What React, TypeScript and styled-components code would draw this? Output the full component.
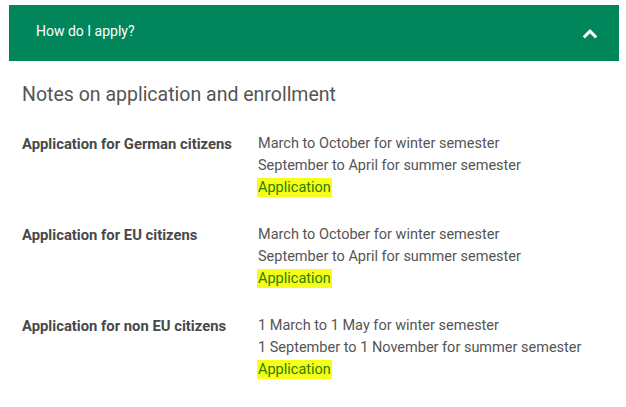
import React from "react";
import styled, { createGlobalStyle } from "styled-components";

interface Note {
  label: string;
  lines: string[];
}

const notes: Note[] = [
  {
    label: "Application for German citizens",
    lines: ["March to October for winter semester", "September to April for summer semester"],
  },
  {
    label: "Application for EU citizens",
    lines: ["March to October for winter semester", "September to April for summer semester"],
  },
  {
    label: "Application for non EU citizens",
    lines: ["1 March to 1 May for winter semester", "1 September to 1 November for summer semester"],
  },
];

const App: React.FunctionComponent = () => {
  return (
    <Page>
      <GlobalStyle />
      <Accordion>
        <Header>
          <HeaderTitle>How do I apply?</HeaderTitle>
          <Chevron viewBox="0 0 16 16">
            <path d="M2.5 11 L8 5.5 L13.5 11" />
          </Chevron>
        </Header>
        <Body>
          <Title>Notes on application and enrollment</Title>
          {notes.map((note) => (
            <Row key={note.label}>
              <Label>{note.label}</Label>
              <Details>
                {note.lines.map((line) => (
                  <Line key={line}>{line}</Line>
                ))}
                <Line>
                  <Link href="#">Application</Link>
                </Line>
              </Details>
            </Row>
          ))}
        </Body>
      </Accordion>
    </Page>
  );
};

export default App;

const GlobalStyle = createGlobalStyle`
  body {
    margin: 0;
    background: #ffffff;
    font-family: Roboto, "Liberation Sans", sans-serif;
  }
`;

const Page = styled.div`
  padding: 5px 7px 0 9px;
`;

const Accordion = styled.section`
  width: 610px;
`;

const Header = styled.div`
  height: 56px;
  background-color: #00865a;
  display: flex;
  align-items: center;
  justify-content: space-between;
  padding: 0 20px 0 27px;
  box-sizing: border-box;
`;

const HeaderTitle = styled.span`
  color: #ffffff;
  font-size: 14px;
  margin-top: -5px;
`;

const Chevron = styled.svg`
  width: 18px;
  height: 18px;
  margin-top: 2px;
  fill: none;
  stroke: #ffffff;
  stroke-width: 2.6;
`;

const Body = styled.div`
  padding: 20px 0 0 13px;
`;

const Title = styled.h2`
  margin: 0 0 24px 0;
  font-size: 19.5px;
  font-weight: 400;
  color: #555555;
  line-height: 28px;
`;

const Row = styled.div`
  display: grid;
  grid-template-columns: 236px 1fr;
  margin-bottom: 25px;
`;

const Label = styled.div`
  font-size: 14.8px;
  font-weight: 700;
  color: #484848;
  line-height: 22px;
`;

const Details = styled.div`
  display: flex;
  flex-direction: column;
`;

const Line = styled.div`
  font-size: 14.5px;
  color: #555555;
  line-height: 22px;
`;

const Link = styled.a`
  color: #2e7d00;
  background-color: #f5ff1a;
  text-decoration: none;
  padding: 1px 1px;
  margin-left: -1px;
`;
